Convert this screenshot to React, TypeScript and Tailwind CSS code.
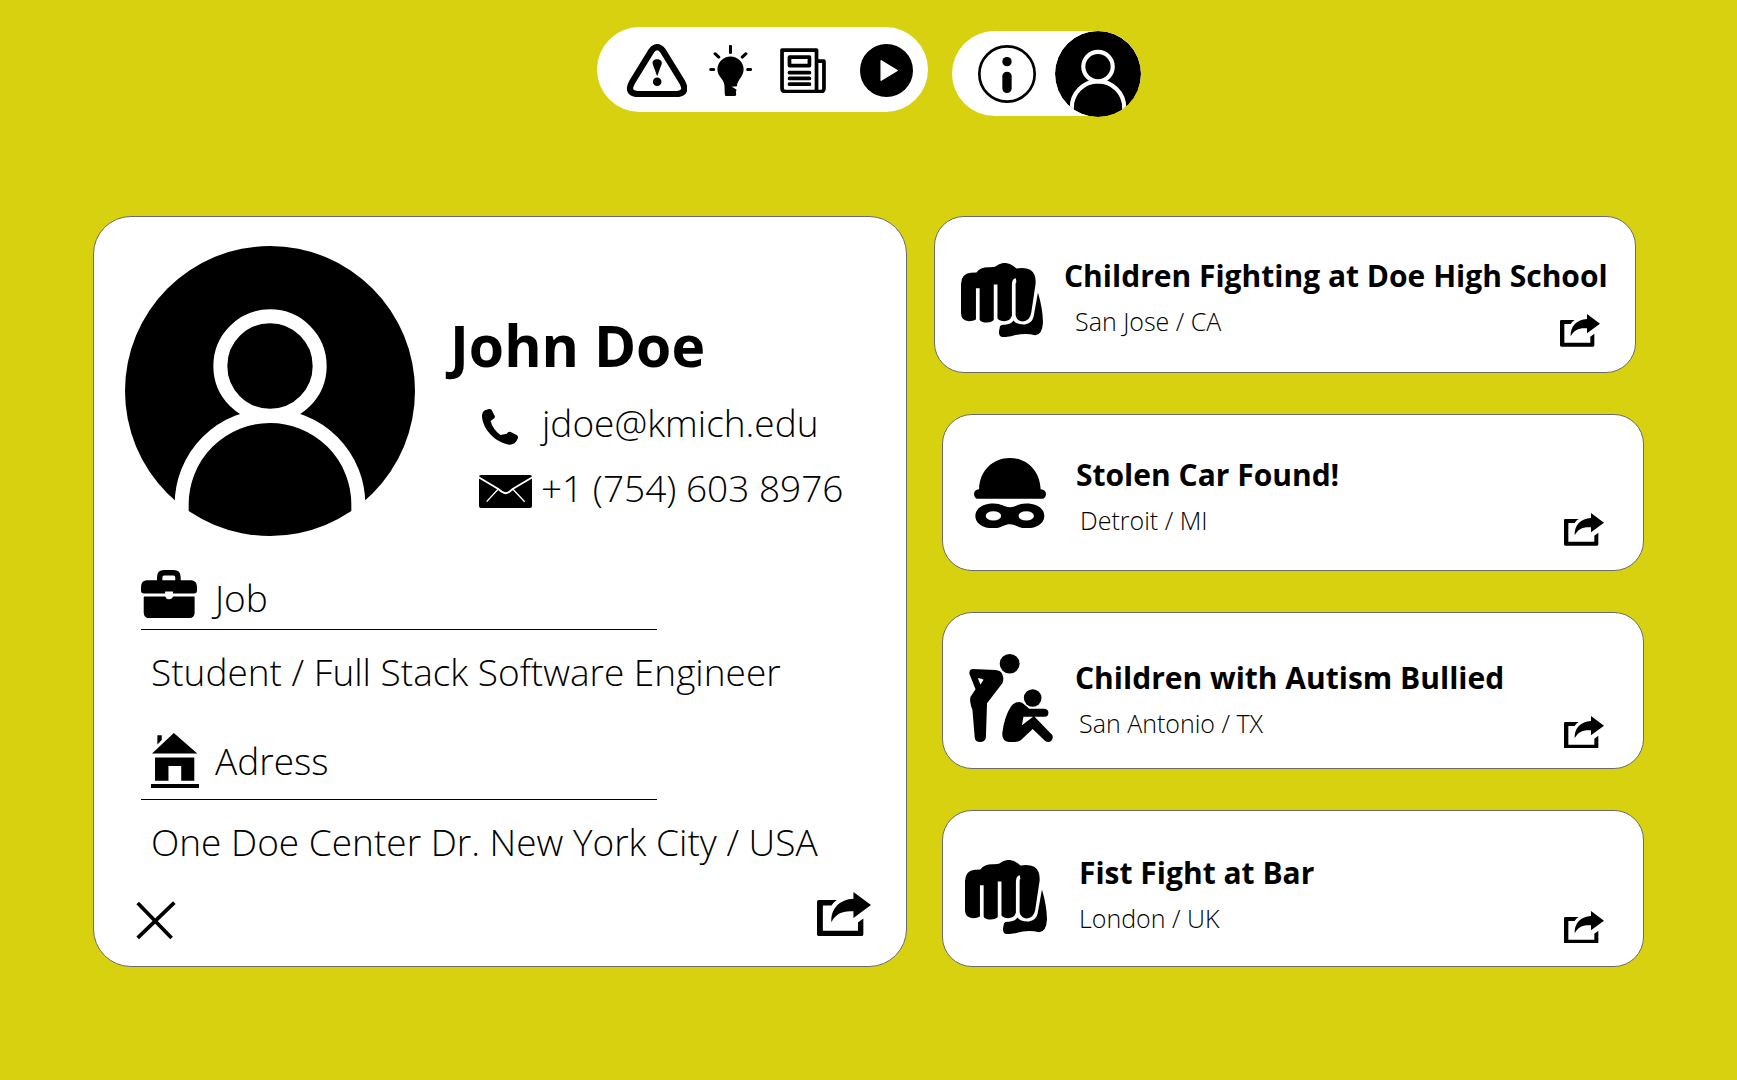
import type { ReactNode } from "react";

type IconProps = { className: string };

function WarningIcon({ className }: IconProps) {
  return (
    <svg viewBox="110 74 181 161" className={className} aria-hidden="true">
      <path d="M184 94Q201 73 218 94L277 190Q294 221 262 225H140Q108 221 125 190Z" fill="none" stroke="black" strokeWidth="19" />
      <path d="M201 120C212 120 217 127 214 136L201 171L188 136C185 127 190 120 201 120Z" />
      <circle cx="201" cy="188" r="13" />
    </svg>
  );
}

function BulbIcon({ className }: IconProps) {
  return (
    <svg viewBox="356 72 128 153" className={className} aria-hidden="true">
      <path d="M381 145A39 39 0 0 1 459 145C459 166 441 174 439 195L423 196Q437 202 438 207L436 211L437 219Q436 225 428 225H410Q403 225 403 218L402 192C400 172 381 166 381 145Z" />
      <path d="M420 76V94M374 98L385 108M466 98L455 108M361 145H370M471 145H480" fill="none" stroke="black" strokeWidth="9" strokeLinecap="round" />
    </svg>
  );
}

function NewsIcon({ className }: IconProps) {
  return (
    <svg viewBox="571 82 136 135" className={className} aria-hidden="true">
      <g fill="none" stroke="black" strokeWidth="11" strokeLinejoin="round" strokeLinecap="round">
        <path d="M577 88H679V211H588Q577 211 577 200Z" />
        <path d="M682 121H701V202Q701 211 692 211H680" />
        <path d="M599 109H658V134H599ZM599 155H658M599 172H658M599 189H658" />
      </g>
    </svg>
  );
}

function PlayIcon({ className }: IconProps) {
  return (
    <svg viewBox="809 74 158 158" className={className} aria-hidden="true">
      <circle cx="888" cy="153" r="79" />
      <path d="M872 124L920 153L872 182Z" fill="white" stroke="white" strokeWidth="4" strokeLinejoin="round" />
    </svg>
  );
}

function InfoIcon({ className }: IconProps) {
  return (
    <svg viewBox="114 71 174 174" className={className} aria-hidden="true">
      <circle cx="201" cy="158" r="83" fill="none" stroke="black" strokeWidth="8" />
      <circle cx="201" cy="121" r="14" />
      <rect x="187" y="151" width="28" height="64" rx="14" />
    </svg>
  );
}

function UserIcon({ className }: IconProps) {
  return (
    <svg viewBox="105 108 870 870" className={className} aria-hidden="true">
      <circle cx="540" cy="543" r="435" />
      <g fill="none" stroke="white" strokeWidth="42">
        <path d="M275 1000V883A265 265 0 0 1 805 883V1000" />
        <circle cx="540" cy="468" r="149" fill="black" />
      </g>
    </svg>
  );
}

function PhoneIcon({ className }: IconProps) {
  return (
    <svg viewBox="156 361 109 108" className={className} aria-hidden="true">
      <path d="M165 365L177 361Q184 360 187 367L195 383Q196 388 190 391L182 397Q188 421 212 440L231 436L234 432Q238 428 243 431L261 440Q267 444 264 451Q257 470 237 469C197 462 158 423 156 383Q156 370 165 365Z" />
    </svg>
  );
}

function MailIcon({ className }: IconProps) {
  return (
    <svg viewBox="147 555 159 99" className={className} aria-hidden="true">
      <rect x="147" y="555" width="159" height="99" rx="6" />
      <g fill="none" stroke="white">
        <path d="M146 562L205 597L218 607Q227 613 236 607L248 597L307 562" strokeWidth="5" />
        <path d="M206 598Q227 620 248 597" strokeWidth="4" />
        <path d="M205 597L170 635M248 597L284 635" strokeWidth="4" />
      </g>
    </svg>
  );
}

function BriefcaseIcon({ className }: IconProps) {
  return (
    <svg viewBox="0 0 165 142" className={className} aria-hidden="true">
      <path d="M55 34V22Q55 8 68 8H96Q109 8 109 22V34" fill="none" stroke="black" strokeWidth="16" />
      <path d="M16 30H149Q165 32 165 50V62Q165 69 158 69H94V63H71V69H7Q0 69 0 62V50Q0 32 16 30Z" />
      <path d="M10 78H71Q74 86 83 86T94 78H156Q158 78 158 82V126Q157 142 142 142H24Q9 142 8 126V82Q8 78 10 78Z" />
    </svg>
  );
}

function HouseIcon({ className }: IconProps) {
  return (
    <svg viewBox="0 0 143 164" className={className} aria-hidden="true">
      <path d="M68 0L138 61H3Z" />
      <path d="M19 7H32V21L19 34Z" />
      <path d="M12 73H129V142H90V98H52V142H12Z" />
      <path d="M0 152H143V164H0Z" />
    </svg>
  );
}

function CloseIcon({ className }: IconProps) {
  return (
    <svg viewBox="0 0 118 114" className={className} aria-hidden="true">
      <path d="M5 6L105 109M113 5L5 109" fill="none" stroke="black" strokeWidth="11" />
    </svg>
  );
}

function ShareIcon({ className }: IconProps) {
  return (
    <svg viewBox="811 313 120 98" className={className} aria-hidden="true">
      <path d="M815 331H855Q847 336 843 343H824V399H902V381L914 372V407Q914 411 910 411H815Q811 411 811 407V335Q811 331 815 331Z" />
      <path d="M892 313L931 342L892 371V356C868 354 853 361 843 380C841 350 862 329 892 328Z" />
    </svg>
  );
}

function FistIcon({ className }: IconProps) {
  return (
    <svg viewBox="93 158 244 221" className={className} aria-hidden="true">
      <path d="M93 220Q94 190 122 187L139 186Q152 169 180 171L194 169Q222 147 250 168L258 174Q284 170 299 178Q317 190 315 220L302 306Q298 331 276 332Q260 331 256 316L249 308L243 318Q238 331 222 331Q208 331 202 324L196 320L190 328Q183 335 170 335Q155 335 149 328L142 322L136 327Q130 331 117 331Q94 330 93 308Z" />
      <path d="M143 340V233M196 340V222M250 328V222Q250 210 257 209" fill="none" stroke="white" strokeWidth="11" />
      <path d="M322 246Q336 292 337 335Q335 371 314 373Q280 364 242 376L220 379Q205 378 206 362L209 346Q213 341 223 342Q242 340 249 329Q258 342 283 341Q304 338 309 318Z" />
    </svg>
  );
}

function BurglarIcon({ className }: IconProps) {
  return (
    <svg viewBox="133 159 215 210" className={className} aria-hidden="true">
      <path d="M148 252C150 196 190 159 240 159S330 196 332 252Q348 254 348 267Q347 281 334 281H147Q134 281 133 267Q133 254 148 252Z" />
      <path
        fillRule="evenodd"
        d="M191 295C216 295 222 306 240 306S264 295 289 295C322 295 343 311 343 332S322 369 289 369C264 369 258 357 240 357S216 369 191 369C158 369 137 353 137 332S158 295 191 295ZM168 332A23 14 0 0 0 214 332A23 14 0 0 0 168 332ZM266 332A23 14 0 0 0 312 332A23 14 0 0 0 266 332Z"
      />
    </svg>
  );
}

function BulliedIcon({ className }: IconProps) {
  return (
    <svg viewBox="101 161 219 262" preserveAspectRatio="none" className={className} aria-hidden="true">
      <ellipse cx="207" cy="190" rx="26" ry="29" />
      <path
        fillRule="evenodd"
        d="M110 206L170 209Q184 210 188 222Q193 236 188 248L148 308L145 410Q142 423 130 423Q118 423 116 410L110 328Q101 300 105 288L118 266L102 220Q101 208 110 206ZM124 233L131 252L139 238Q134 232 124 233Z"
      />
      <ellipse cx="267" cy="292" rx="23" ry="26" />
      <path
        fillRule="evenodd"
        d="M232 304Q240 304 246 312L258 324H298Q308 326 308 336Q308 348 298 348H272L318 402Q322 412 315 420Q307 426 299 419L267 384L236 418Q230 423 220 423H205Q186 420 188 395Q193 348 210 318Q219 304 232 304ZM243 348L239 373L268 348Z"
      />
    </svg>
  );
}

type Report = {
  title: string;
  place: string;
  icon: ReactNode;
  card: string;
  text: string;
  placeRow: string;
};

const reports: Report[] = [
  {
    title: "Children Fighting at Doe High School",
    place: "San Jose / CA",
    icon: <FistIcon className="mt-[7px] w-[82px]" />,
    card: "mr-2 pt-[39px] pl-[26px]",
    text: "ml-[21px]",
    placeRow: "pl-[11px] pr-[35px]",
  },
  {
    title: "Stolen Car Found!",
    place: "Detroit / MI",
    icon: <BurglarIcon className="mt-[3px] w-[72px]" />,
    card: "ml-2 pt-10 pl-[31px]",
    text: "ml-[30px]",
    placeRow: "pl-1 pr-[39px]",
  },
  {
    title: "Children with Autism Bullied",
    place: "San Antonio / TX",
    icon: <BulliedIcon className="-mt-1 h-[88px] w-[84px]" />,
    card: "ml-2 pt-[45px] pl-[26px]",
    text: "ml-[22px]",
    placeRow: "pl-1 pr-[39px]",
  },
  {
    title: "Fist Fight at Bar",
    place: "London / UK",
    icon: <FistIcon className="mt-[7px] w-[82px]" />,
    card: "ml-2 pt-[42px] pl-[22px]",
    text: "ml-[32px]",
    placeRow: "pl-0 pr-[39px]",
  },
];

function ReportCard({ report }: { report: Report }) {
  return (
    <article className={"flex min-h-[157px] items-start rounded-[30px] border border-[#6b6b6b] bg-white " + report.card}>
      <div className="shrink-0">{report.icon}</div>
      <div className={"min-w-0 flex-1 " + report.text}>
        <h2 className="text-[30px] leading-10 font-bold whitespace-nowrap">{report.title}</h2>
        <div className={"mt-[9px] flex items-start justify-between " + report.placeRow}>
          <p className="text-[25px] leading-8 font-light">{report.place}</p>
          <button type="button" aria-label={"Share " + report.title} className="mt-[9px]">
            <ShareIcon className="w-10" />
          </button>
        </div>
      </div>
    </article>
  );
}

export default function App() {
  return (
    <div className="min-h-screen bg-[#d7d10f] px-[93px] pt-[27px] pb-12 font-['Open_Sans','Noto_Sans',sans-serif] text-black">
      <header className="flex items-start justify-center gap-6">
        <nav aria-label="Sections" className="flex h-[85px] items-center rounded-full bg-white pt-[2px] pr-[15px] pl-[30px]">
          <button type="button" aria-label="Alerts"><WarningIcon className="w-[60px]" /></button>
          <button type="button" aria-label="Tips" className="ml-[22px]"><BulbIcon className="w-[43px]" /></button>
          <button type="button" aria-label="News" className="ml-[28px]"><NewsIcon className="w-[46px]" /></button>
          <button type="button" aria-label="Videos" className="ml-[34px]"><PlayIcon className="w-[53px]" /></button>
        </nav>
        <nav aria-label="Account" className="mt-1 flex h-[85px] items-center rounded-full bg-white pl-[26px]">
          <button type="button" aria-label="Information"><InfoIcon className="w-[58px]" /></button>
          <button type="button" aria-label="Profile" className="ml-[19px]"><UserIcon className="w-[86px] rounded-full" /></button>
        </nav>
      </header>

      <main className="mt-[100px] grid grid-cols-[814fr_710fr] gap-[27px]">
        <section className="flex flex-col rounded-[38px] border border-[#6b6b6b] bg-white pt-[29px] pr-[35px] pb-[26px] pl-[31px]">
          <div className="flex items-start">
            <UserIcon className="w-[290px] shrink-0" />
            <div className="ml-8 pt-[67px]">
              <h1 className="pl-[3px] text-[57px] leading-[64px] font-bold">John Doe</h1>
              <div className="mt-[22px] flex items-center">
                <div className="ml-8 w-[63px]"><PhoneIcon className="mt-2 ml-[3px] w-9" /></div>
                <a href="mailto:jdoe@kmich.edu" className="text-[37px] leading-[48px] font-light">jdoe@kmich.edu</a>
              </div>
              <div className="mt-[17px] flex items-center">
                <div className="ml-8 w-[62px]"><MailIcon className="mt-[6px] w-[53px]" /></div>
                <a href="tel:+17546038976" className="text-[37px] leading-[48px] font-light">+1 (754) 603 8976</a>
              </div>
            </div>
          </div>

          <div className="mt-[34px] ml-4 flex h-[60px] w-[516px] items-start border-b border-black">
            <BriefcaseIcon className="w-[56px]" />
            <h2 className="mt-1 ml-[18px] text-[37px] leading-[48px] font-light">Job</h2>
          </div>
          <p className="mt-[18px] ml-[26px] text-[37px] leading-[48px] font-light whitespace-nowrap">Student / Full Stack Software Engineer</p>

          <div className="mt-[37px] ml-4 flex h-[67px] w-[516px] items-start border-b border-black">
            <HouseIcon className="ml-[10px] w-[48px]" />
            <h2 className="mt-1 ml-[16px] text-[37px] leading-[48px] font-light">Adress</h2>
          </div>
          <p className="mt-[18px] ml-[26px] text-[37px] leading-[48px] font-light whitespace-nowrap">One Doe Center Dr. New York City / USA</p>

          <div className="mt-[26px] flex items-start justify-between pl-[11px]">
            <button type="button" aria-label="Close" className="mt-[9px]"><CloseIcon className="w-10" /></button>
            <button type="button" aria-label="Share profile"><ShareIcon className="w-[54px]" /></button>
          </div>
        </section>

        <section aria-label="Reports" className="flex flex-col justify-between">
          {reports.map((report) => (
            <ReportCard key={report.title} report={report} />
          ))}
        </section>
      </main>
    </div>
  );
}
